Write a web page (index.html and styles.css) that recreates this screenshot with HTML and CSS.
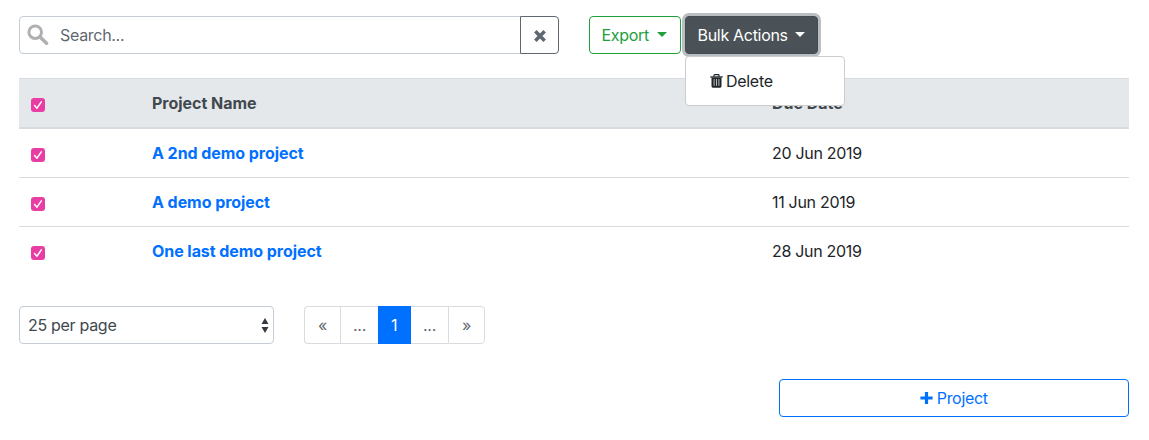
FILE: index.html
```html
<!DOCTYPE html>
<html lang="en">
<head>
<meta charset="utf-8">
<title>Projects</title>
<link rel="stylesheet" href="styles.css">
</head>
<body>
<svg class="defs" width="0" height="0" aria-hidden="true">
  <symbol id="check" viewBox="0 0 14 14"><path d="M3.6 7.6 6 10.2 10.3 3.8" fill="none" stroke="#fff" stroke-width="1.5" stroke-linecap="round" stroke-linejoin="round"/></symbol>
</svg>
<main class="page">
  <div class="toolbar">
    <div class="search">
      <div class="search-field">
        <svg class="search-icon" viewBox="0 0 22 22"><circle cx="8.2" cy="8.2" r="6.3" fill="none" stroke="#b0b0b0" stroke-width="3"/><path d="M13 13 19.5 19.2" stroke="#b0b0b0" stroke-width="3.6" stroke-linecap="round"/></svg>
        <span class="search-text">Search...</span>
      </div>
      <button class="clear" aria-label="Clear"><svg width="12" height="12" viewBox="0 0 12 12"><path d="M2.6 2.6 9.4 9.4M9.4 2.6 2.6 9.4" stroke="#5f6870" stroke-width="3.6" stroke-linecap="square"/></svg></button>
    </div>
    <div class="actions">
      <button class="btn export"><span class="export-text">Export</span><i class="caret"></i></button>
      <div class="dropdown">
        <button class="btn bulk"><span class="bulk-text">Bulk Actions</span><i class="caret"></i></button>
        <div class="menu">
          <svg width="13" height="14" viewBox="0 0 13 14"><path d="M4 2.4V1.5Q4 .7 4.8.7h3.4q.8 0 .8.8v.9" fill="none" stroke="#212529" stroke-width="1.3"/><path d="M.3 2.3h12.4v1.3H.3z" fill="#212529"/><path d="M1.5 3.5h10v8.8q0 1.4-1.4 1.4H2.9q-1.4 0-1.4-1.4z" fill="#212529"/><path d="M4.1 5v6.8M6.5 5v6.8M8.9 5v6.8" stroke="#bbb" stroke-width="1"/></svg>
          <span class="delete-text">Delete</span>
        </div>
      </div>
    </div>
  </div>

  <div class="table">
    <div class="row head"><span class="box"><svg><use href="#check"/></svg></span><span class="name">Project Name</span><span class="due">Due Date</span></div>
    <div class="row"><span class="box"><svg><use href="#check"/></svg></span><a class="name link">A 2nd demo project</a><span class="due">20 Jun 2019</span></div>
    <div class="row"><span class="box"><svg><use href="#check"/></svg></span><a class="name link">A demo project</a><span class="due">11 Jun 2019</span></div>
    <div class="row"><span class="box"><svg><use href="#check"/></svg></span><a class="name link">One last demo project</a><span class="due">28 Jun 2019</span></div>
  </div>

  <div class="paging">
    <div class="select"><span class="select-text">25 per page</span><svg width="8" height="15" viewBox="0 0 8 15"><path d="M4 0 7.5 6H.5zM4 15 .5 9h7z" fill="#343a40"/></svg></div>
    <div class="pages"><span class="pg first">«</span><span class="pg dots">...</span><span class="pg active">1</span><span class="pg dots after">...</span><span class="pg last">»</span></div>
  </div>

  <div class="footer">
    <button class="btn add"><svg width="13" height="12" viewBox="0 0 13 12"><path d="M6.5 1.5v9M2 6h9" stroke="#0070ff" stroke-width="3.2" stroke-linecap="square"/></svg><span class="add-text">Project</span></button>
  </div>
</main>
</body>
</html>
```
FILE: styles.css
```css
* { box-sizing: border-box; }
body {
  margin: 0;
  background: #fff;
  color: #212529;
  font: 16px/24px Inter, "Liberation Sans", sans-serif;
  letter-spacing: -0.3px;
}
button { font: inherit; letter-spacing: inherit; background: #fff; margin: 0; }
svg { display: block; flex: none; }
span, a { white-space: nowrap; }
.defs { position: absolute; }
.page { padding: 16px 20px 0 19px; }

.toolbar { display: flex; height: 38px; }
.search { display: flex; width: 540px; }
.search-field {
  display: flex;
  align-items: center;
  width: 502px;
  padding-left: 7px;
  border: 1px solid #c5ccd5;
  border-radius: 4px 0 0 4px;
  color: #5f6870;
}
.search-icon { width: 22px; height: 22px; margin-right: 11px; }
.clear {
  display: flex;
  align-items: center;
  justify-content: center;
  width: 39px;
  margin-left: -1px;
  padding: 2px 0 0;
  border: 1px solid #5f6870;
  border-radius: 0 4px 4px 0;
}
.actions { display: flex; gap: 4px; margin-left: 30px; }
.btn {
  display: flex;
  align-items: center;
  height: 38px;
  padding: 0 11.5px;
  border: 1px solid;
  border-radius: 4px;
}
.export { width: 92px; color: #20a03c; }
.bulk {
  width: 133px;
  color: #fff;
  background: #4a5157;
  border-color: #444b51;
  box-shadow: 0 0 0 3px #b9bec2;
}
.caret {
  margin: 0 0 2px 7.5px;
  border: 5px solid transparent;
  border-top-color: currentColor;
  border-bottom: 0;
}
.export .caret { margin-left: 8.5px; }
.dropdown { position: relative; }
.menu {
  position: absolute;
  top: 40px;
  left: 0;
  display: flex;
  align-items: center;
  gap: 3.5px;
  width: 160px;
  height: 50px;
  padding-left: 23.5px;
  background: #fff;
  border: 1px solid #ccc;
  border-radius: 4px;
}

.table { margin-top: 24px; }
.row {
  display: grid;
  grid-template-columns: 121px 620px 1fr;
  align-items: center;
  height: 49px;
  padding-left: 12px;
  border-bottom: 1px solid #d8dce1;
}
.row:last-child { border-bottom-color: transparent; }
.head {
  height: 51px;
  background: #e4e8eb;
  color: #41484e;
  font-weight: 700;
  letter-spacing: -0.03px;
  border-top: 1px solid #d8dce1;
  border-bottom: 2px solid #d8dce1;
}
.box {
  width: 14px;
  height: 14px;
  margin-top: 3px;
  border-radius: 3px;
  background: #e83ea3;
}
.box svg { width: 14px; height: 14px; }
.link { color: #0070ff; font-weight: 700; letter-spacing: -0.06px; }

.paging { display: flex; gap: 30px; height: 38px; margin-top: 30px; }
.select {
  display: flex;
  align-items: center;
  justify-content: space-between;
  width: 255px;
  padding: 0 4px 0 8px;
  border: 1px solid #c5ccd5;
  border-radius: 4px;
  color: #41484e;
}
.pages { display: flex; color: #5f6870; }
.pg {
  display: flex;
  align-items: center;
  justify-content: center;
  width: 37px;
  border: 1px solid #d8dce1;
  border-right: 0;
}
.first { width: 36px; border-radius: 4px 0 0 4px; }
.dots { width: 38px; }
.active { width: 33px; padding-right: 2px; color: #fff; background: #0070ff; border-color: #0070ff; }
.after { width: 37px; border-left: 0; }
.last { border-right: 1px solid #d8dce1; border-radius: 0 4px 4px 0; }

.footer { display: flex; justify-content: flex-end; margin-top: 35px; }
.add { width: 350px; justify-content: center; gap: 3.5px; color: #0070ff; }
```
